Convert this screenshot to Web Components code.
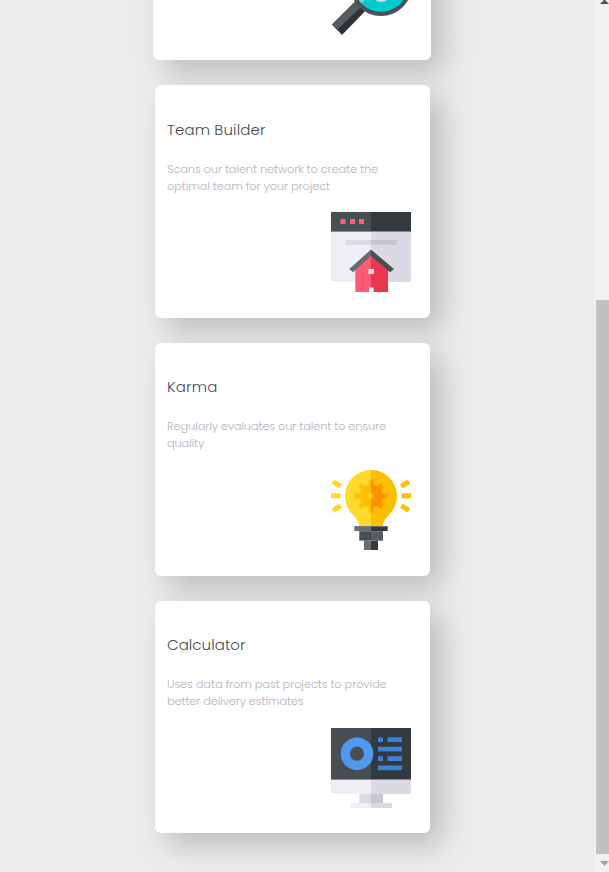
<!DOCTYPE html>
<html lang="en"><head><meta charset="utf-8"><title>Features</title>
<style>html,body{margin:0;height:872px;overflow:hidden;background:#ececec;font-family:Poppins,Inter,"Open Sans",sans-serif}</style></head>
<body>
<feature-page>
<feature-card class="raised"><feature-icon slot="icon" name="search"></feature-icon></feature-card>
<feature-card><fit-line slot="title" width="98.5">Team Builder</fit-line><fit-line slot="text" width="211">Scans our talent network to create the</fit-line><fit-line slot="text" width="163">optimal team for your project</fit-line><feature-icon slot="icon" name="team"></feature-icon></feature-card>
<feature-card class="up"><fit-line slot="title" width="50.5">Karma</fit-line><fit-line slot="text" width="219">Regularly evaluates our talent to ensure</fit-line><fit-line slot="text" width="37">quality</fit-line><feature-icon slot="icon" name="karma"></feature-icon></feature-card>
<feature-card class="up"><fit-line slot="title" width="78.5">Calculator</fit-line><fit-line slot="text" width="219.5">Uses data from past projects to provide</fit-line><fit-line slot="text" width="136.5">better delivery estimates</fit-line><feature-icon slot="icon" name="calc"></feature-icon></feature-card>
</feature-page>
<script>
const root=(el,html)=>{el.attachShadow({mode:'open'}).innerHTML=html};
customElements.define('scroll-track',class extends HTMLElement{constructor(){super();root(this,`<style>
:host{display:flex;flex-direction:column;align-items:flex-start;width:15px;height:872px;background:#f1f1f1;overflow:hidden;flex:none}
svg{display:block;flex:none}.thumb{width:13px;height:554px;margin-left:2px;background:#c1c1c1;flex:none}</style>
<svg width="15" height="300"><path d="M6 4L10.5-.5L15 4Z" fill="#505050"/></svg><div class="thumb"></div><svg width="15" height="18"><path d="M6 7H15L10.5 12Z" fill="#a3a3a3"/></svg>`)}});
customElements.define('feature-page',class extends HTMLElement{constructor(){super();root(this,`<style>
:host{display:flex;height:872px;overflow:hidden}
main{width:594px;height:872px;overflow:hidden;display:flex;flex-direction:column;align-items:flex-start;gap:25px;padding-left:155px;box-sizing:border-box}</style>
<main><slot></slot></main><scroll-track></scroll-track>`)}});
customElements.define('feature-card',class extends HTMLElement{constructor(){super();root(this,`<style>
:host{display:flex;flex-direction:column;flex:none;width:275px;height:233px;box-sizing:border-box;padding:34px 19px 26px 12px;background:#fff;border-radius:6px;box-shadow:12px 12px 30px #bbb}
:host(.raised){width:278px;height:235px;margin:-175px 0 0 -2px;padding-bottom:25px}
:host(.up){padding-top:33px}
:host(:last-of-type){height:232px;padding-bottom:25px}
h3{margin:0;font-size:15px;line-height:22px;height:22px;font-weight:350;color:#454a54}
p{margin:20px 0 0;font-size:11.4px;line-height:17px;font-weight:300;color:#b0b3c0}
footer{margin-top:auto;display:flex;justify-content:flex-end}</style>
<h3><slot name="title"></slot></h3><p><slot name="text"></slot></p><footer><slot name="icon"></slot></footer>`)}});
/* One line of text whose tracking is tuned to a given width. */
customElements.define('fit-line',class extends HTMLElement{constructor(){super();root(this,`<style>:host{display:block;white-space:nowrap}</style><span><slot></slot></span>`)}
connectedCallback(){const s=this.shadowRoot.querySelector('span');const n=this.textContent.length;s.style.letterSpacing=((this.getAttribute('width')-s.getBoundingClientRect().width)/n)+'px'}});
const art={
search:`<g transform="translate(-1 -1)"><path d="M1 70.5L33 39L39 52L11 81Z" fill="#2f3335"/><path d="M1 70.5L28 43.5L34 49L6 76Z" fill="#555b5f"/><path d="M24 47L35 37L39 49L33 57L29 53Z" fill="#555b5f"/><path d="M24 47L31 40L34 48L29 53Z" fill="#70777b"/><circle cx="50" cy="31" r="31" fill="#4b5159"/><circle cx="50" cy="31" r="26.8" fill="#00cccf"/><path d="M23.5 31A27 27 0 0 0 30.5 49.6L39 41L28 27Z" fill="#55dedf"/><circle cx="50" cy="38" r="10" fill="#dadae3"/></g>`,
team:`<path d="M0 0H40V20H0Z" fill="#484f54"/><path d="M40 0H80V20H40Z" fill="#32393f"/><path d="M0 20H40V70H0Z" fill="#efeef4"/><path d="M40 20H80V70H40Z" fill="#dad9e4"/><path d="M0 19H80V20H0Z" fill="#868c91"/><path d="M9.5 7h5v5h-5zM19 7h5v5h-5zM28 7h5v5h-5z" fill="#ff5f7b"/><path d="M14.5 28H40V33H14.5Z" fill="#dad9e4"/><path d="M40 28H66V33H40Z" fill="#c7c7d1"/><path d="M24.3 56L40 42V80H24.3Z" fill="#ff5a76"/><path d="M40 42L57 56V80H40Z" fill="#e8384f"/><path d="M18.3 57L40 37.5V44L22 60.3Z" fill="#666d71"/><path d="M40 37.5L63 57L59 60.3L40 44Z" fill="#484f54"/><path d="M37.5 57H40V62H37.5Z" fill="#f1eff4"/><path d="M40 57H43V62H40Z" fill="#dad9e4"/><path d="M38 75.5H42.5V80H38Z" fill="#fff"/>`,
karma:`<path d="M40 0A26 26 0 0 0 22 44.8Q28.3 51 28.3 57H40Z" fill="#ffda2d"/><path d="M40 0A26 26 0 0 1 58 44.8Q51.7 51 51.7 57H40Z" fill="#fdbf00"/>
<clipPath id="l"><path d="M0 0H40V80H0Z"/></clipPath><clipPath id="r"><path d="M40 0H80V80H40Z"/></clipPath>
<defs><g id="g"><circle cx="40" cy="26" r="11.5"/><path d="M37.7 9.5h4.6v33h-4.6zM23.5 23.7h33v4.6h-33z"/><path d="M37.7 10.5h4.6v31h-4.6zM24.5 23.7h31v4.6h-31z" transform="rotate(45 40 26)"/></g></defs>
<use href="#g" fill="#fdbf00" clip-path="url(#l)"/><use href="#g" fill="#ff9100" clip-path="url(#r)"/><path d="M37.6 23.6H40V28.4H37.6Z" fill="#ffda2d"/><path d="M40 23.6H42.4V28.4H40Z" fill="#fdbf00"/>
<g fill="#ffda2d"><path d="M0 23.3H9.5V28.3H0Z"/><path d="M1.3 11.5h9v5h-9z" transform="rotate(32 5.8 14)"/><path d="M1.3 35.5h9v5h-9z" transform="rotate(-32 5.8 38)"/></g><g fill="#fdbf00"><path d="M70.5 23.3H80V28.3H70.5Z"/><path d="M69.7 11.5h9v5h-9z" transform="rotate(-32 74.2 14)"/><path d="M69.7 35.5h9v5h-9z" transform="rotate(32 74.2 38)"/></g>
<path d="M23.3 56H40V61H23.3Z" fill="#686f73"/><path d="M40 56H56.7V61H40Z" fill="#32393f"/><path d="M28.3 61H40V70.5H28.3Z" fill="#484f54"/><path d="M40 61H52V70.5H40Z" fill="#555b60"/><path d="M33 70.5H40V80H33Z" fill="#686f73"/><path d="M40 70.5H47V80H40Z" fill="#32393f"/><path d="M23.3 56h33.4v.7H23.3zM28.3 61h23.7v.7H28.3zM28.3 70.2h23.7v.7H28.3z" fill="#7a7f83"/>`,
calc:`<path d="M0 0H40V52H0Z" fill="#484f54"/><path d="M40 0H80V52H40Z" fill="#32393f"/><path d="M0 51H80V52H0Z" fill="#868c91"/><path d="M0 52H40V66H0Z" fill="#efeef4"/><path d="M40 52H80V66H40Z" fill="#dad9e4"/><path d="M28.3 66H40V75H28.3Z" fill="#dad9e4"/><path d="M40 66H52V75H40Z" fill="#c7c7d1"/><path d="M19 75H40V80H19Z" fill="#efeef4"/><path d="M40 75H61V80H40Z" fill="#dad9e4"/><circle cx="26" cy="25.7" r="11.7" fill="none" stroke="#5099f0" stroke-width="9.2"/><path d="M47 9.3h5v4.7h-5zM56.5 9.3H71V14H56.5zM47 18.8H71v4.7H47zM47 28.2h5v4.7h-5zM56.5 28.2H71v4.7H56.5zM47 37.5H71v4.7H47z" fill="#3c82d6"/>`};
customElements.define('feature-icon',class extends HTMLElement{constructor(){super();root(this,`<style>:host{display:block;width:80px;height:80px}svg{display:block;overflow:visible}</style><svg width="80" height="80" viewBox="0 0 80 80">${art[this.getAttribute('name')]}</svg>`)}});
</script></body></html>
